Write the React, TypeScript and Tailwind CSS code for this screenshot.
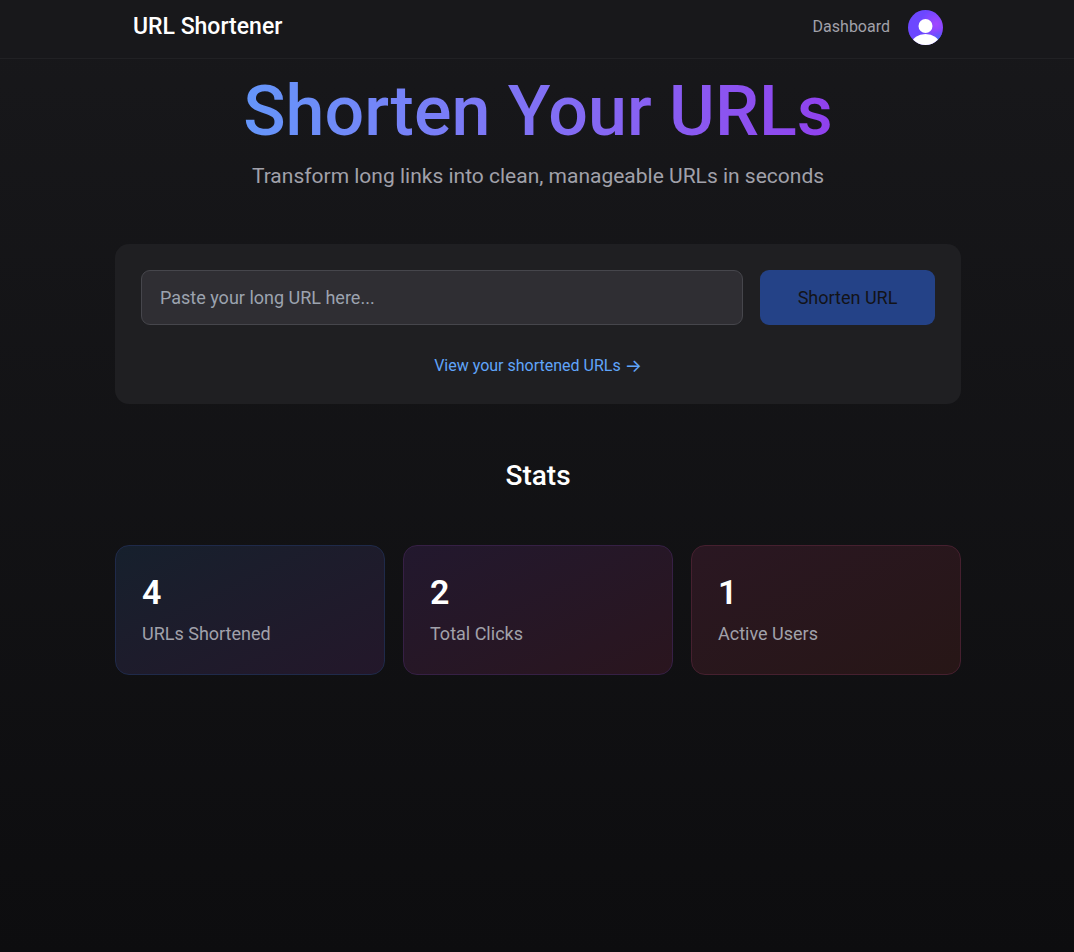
const stats = [
  { value: "4", label: "URLs Shortened", look: "from-[#16202d] to-[#23172a] border-[#1f2a4a]" },
  { value: "2", label: "Total Clicks", look: "from-[#22182e] to-[#2a151e] border-[#362045]" },
  { value: "1", label: "Active Users", look: "from-[#2a1722] to-[#271616] border-[#46202f]" },
];

export default function App() {
  return (
    <div className="min-h-screen bg-linear-to-b from-[#18181b] to-[#0d0d0f] font-[Roboto,sans-serif] text-white">
      <header className="border-b border-[#212124] bg-[#18181b] pl-0.5">
        <div className="mx-auto flex h-[58px] max-w-[846px] items-center justify-between px-[18px] pb-1">
          <a href="#" className="text-[23px] font-medium">URL Shortener</a>
          <nav className="flex items-center gap-[18px]">
            <a href="#dashboard" className="text-[16px] text-[#a1a1aa]">Dashboard</a>
            <button type="button" aria-label="Account" className="size-[35px] overflow-hidden rounded-full">
              <svg viewBox="0 0 35 35" className="size-full" aria-hidden="true">
                <defs>
                  <radialGradient id="violet" cx="0.8" cy="0.4" r="0.45">
                    <stop offset="0" stopColor="#a347ff" />
                    <stop offset="1" stopColor="#6c47ff" />
                  </radialGradient>
                  <radialGradient id="blue" cx="0.9" cy="0.85" r="0.3">
                    <stop offset="0" stopColor="#3f74f5" />
                    <stop offset="1" stopColor="#6c47ff" stopOpacity="0" />
                  </radialGradient>
                </defs>
                <rect width="35" height="35" fill="url(#violet)" />
                <rect width="35" height="35" fill="url(#blue)" />
                <circle cx="17.5" cy="16" r="7" fill="#fff" />
                <ellipse cx="17.5" cy="33" rx="13.5" ry="9" fill="#fff" />
              </svg>
            </button>
          </nav>
        </div>
      </header>
      <div className="pl-0.5">
        <main className="mx-auto max-w-[846px] pt-4">
          <section className="text-center">
            <h1 className="mx-auto w-fit bg-linear-to-r from-[#6496fa] to-[#9040ee] bg-clip-text text-[70px] leading-[72px] font-medium text-transparent">Shorten Your URLs</h1>
            <p className="mt-[14px] text-[21px] leading-[30px] text-[#a1a1aa]">Transform long links into clean, manageable URLs in seconds</p>
          </section>
          <section className="mt-[53px] rounded-[14px] bg-[#1f1f22] p-[26px]">
            <form className="flex gap-[17px]">
              <input aria-label="Long URL" placeholder="Paste your long URL here..." className="h-[55px] min-w-0 flex-1 rounded-[9px] border border-[#46464c] bg-[#2f2e33] px-[18px] text-[18px] placeholder:text-[#9ca3af]" />
              <button type="button" disabled className="h-[55px] w-[175px] rounded-[9px] bg-[#244287] text-[18px] text-[#131317]">Shorten URL</button>
            </form>
            <a href="#urls" className="mx-auto mt-[28px] flex w-fit items-center gap-1 text-[16px] leading-[25px] text-[#60a5fa]">
              View your shortened URLs <span className="font-['Inter',sans-serif] text-[18px]">→</span>
            </a>
          </section>
          <section className="mt-[52px]">
            <h2 className="text-center text-[28px] leading-[40px] font-medium">Stats</h2>
            <div className="mt-[49px] grid grid-cols-3 gap-[18px]">
              {stats.map((s) => (
                <article key={s.label} className={`rounded-[14px] border bg-linear-to-br px-[26px] pt-[26px] pb-[26px] ${s.look}`}>
                  <div className="text-[34px] leading-[40px] font-semibold">{s.value}</div>
                  <div className="mt-2 text-[18px] leading-[28px] text-[#a1a1aa]">{s.label}</div>
                </article>
              ))}
            </div>
          </section>
        </main>
      </div>
    </div>
  );
}
